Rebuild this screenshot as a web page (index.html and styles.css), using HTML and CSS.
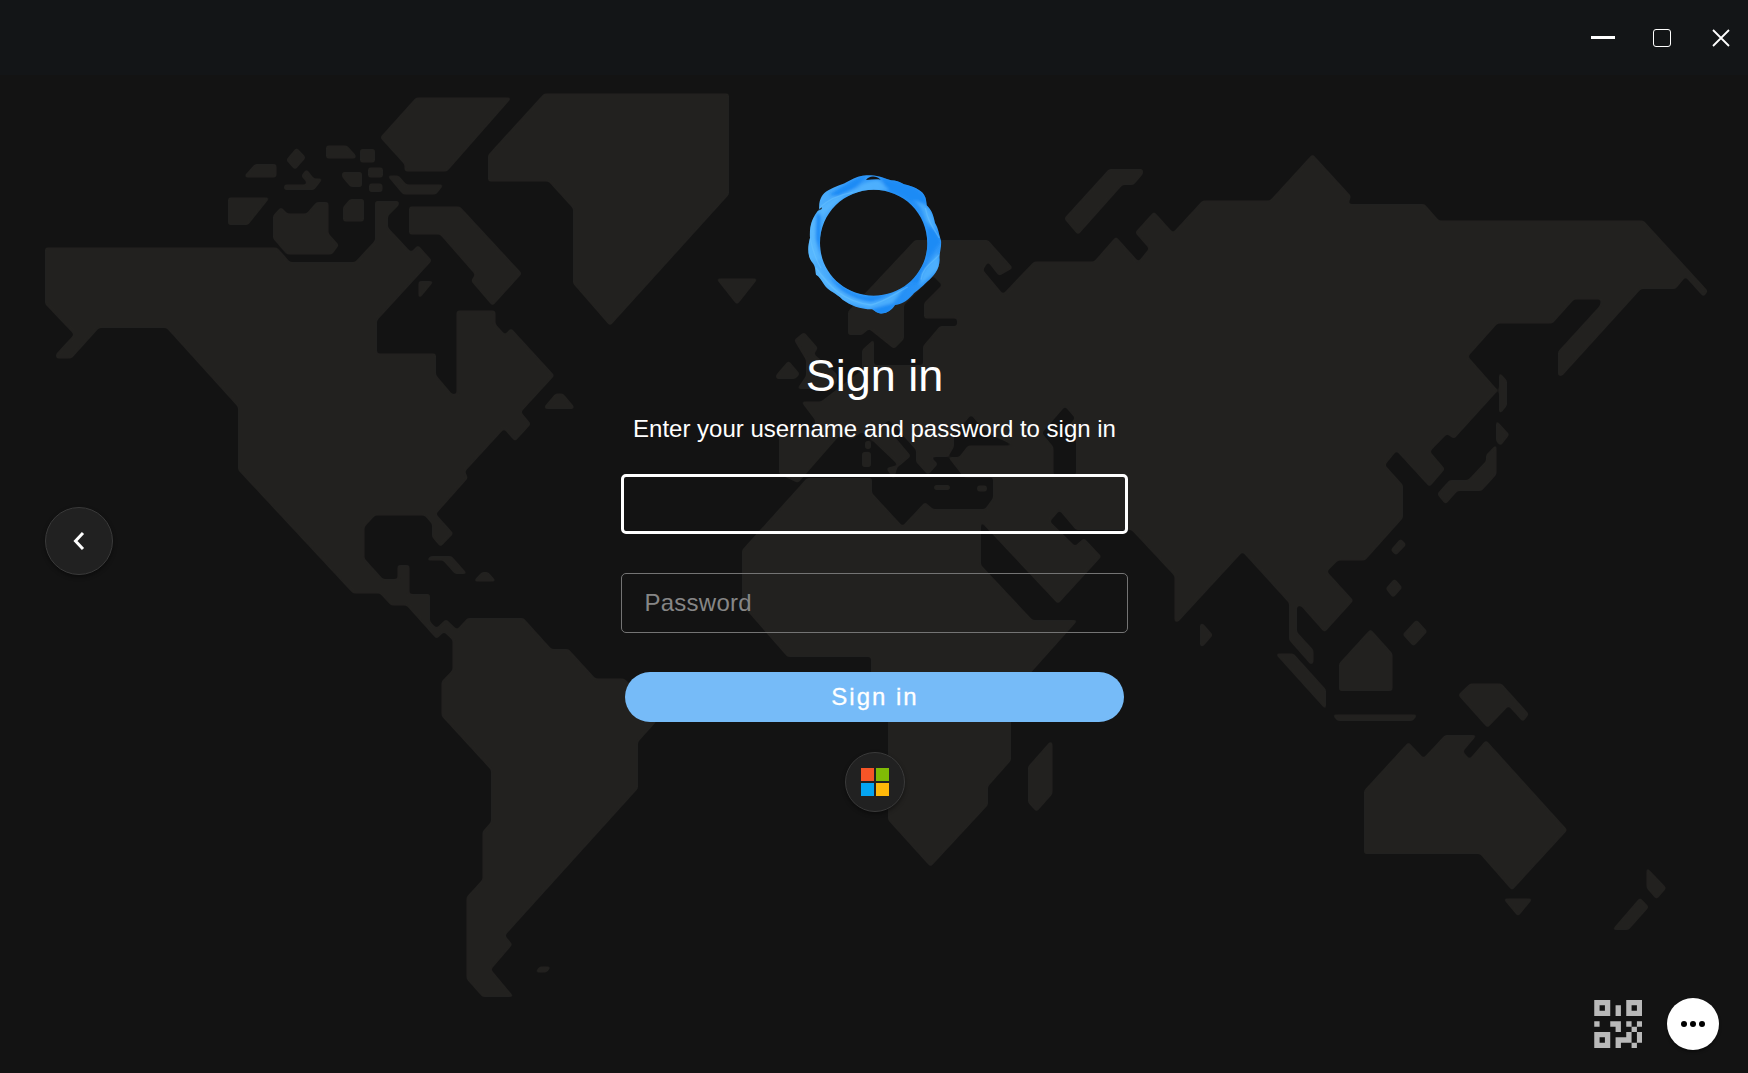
FILE: index.html
```html
<!DOCTYPE html>
<html lang="en">
<head>
<meta charset="utf-8">
<title>Sign in</title>
<link rel="stylesheet" href="styles.css">
</head>
<body>
<div class="window">
  <svg class="map" viewBox="0 0 1748 1073" aria-hidden="true">
    <defs>
      <filter id="soften" x="0" y="0" width="1748" height="1073" filterUnits="userSpaceOnUse" color-interpolation-filters="sRGB">
        <feGaussianBlur stdDeviation="1.6"/>
        <feComponentTransfer><feFuncA type="linear" slope="4" intercept="-1.5"/></feComponentTransfer>
      </filter>
    </defs>
    <g class="land" filter="url(#soften)">
      <!-- North and South America -->
      <path d="M45 247.500H277L290 262H355L375 240.500V201H399V205L388 216V227.500L411 252L418 245L432 260.500L377 320.500V353.500H436V375L452 394H456.500V310.500H495.500V324L505 334.500L511 328L554.500 375.500L521 412L531 424L515 441.500L504 429L465 471.500L468 478L436 514L453.500 533.500L440.500 547L432 537V524L424.500 515.500H375L364.500 527V558.500L383 579H397.500V565H409.500V594H430V621.500L436.500 628L446 619L457 629.500L467.500 618H523.500L551.500 649H568.500L595.500 678.500H624L656 708V722L638 742V788.500L505 935.500L512.500 944.500L491 969.500L514 997H482.500L466.500 979V897L482.500 879.500V831.500L491 822V770L441.500 716V681.500L452.500 670V640L444 632L436.500 639L406.500 605.500H391L380 593.500H353L238 470V407L166.500 328H99L71.500 358.500H56V354L74 334.500L45 304Z"/>
      <!-- Arctic islands and Greenland -->
      <path d="M416 97.500H512L447 171.500H404.500V164.500L380 137.500ZM544 93.500H729V194.500L610 326L573 283.500V208.500L548.500 181.500H488V155ZM409 206.500H460L522 273.500L492.500 306L471 281L475 274.500L440 234.500H409ZM387 175.500H398.500L406.500 184.500H444L436 194.500H403ZM350 199H364V221.500H343V207ZM369 183.500H382.500V192H369ZM368 167.500H383V177.500H368ZM360 149H375V162.500H360ZM342 172H362V187H350.500L342 177ZM326 145.500H347L356 155.500V158.500H326ZM296.500 147.500L306 157.500L295 170L286 160ZM255 164H276.500V177.500H245V175ZM306.500 169L314 178.500H323L314 190H284V184.500H306.500V182L301 176ZM228 197.500H270L248 225H228ZM273 215.500L281 207L287.500 213.500H306.500L316.500 202H328.500V233.500L339 245L332 254.500H287L273 238.500ZM418.500 281H434L420 298H418.500ZM544.500 406.500L555.500 393.500H563L574 406.500V409H544.500ZM716 278.500H758L737 305ZM426 560.500L430.500 556H451.500L467.500 574H455L443 560.500ZM473 581.500L482 572H488L496.500 581.500ZM535 972.500L539.500 966.500H551.500L546.500 972.500Z"/>
      <!-- Europe, Africa and Asia with the enclosed Caspian Sea -->
      <path fill-rule="evenodd" d="M779 430V474L798 483L840 435L852 439L862 432L873 441L898 465L886 468L894 480L897 468L911 456L884 424L889 420L916 450V462L928 475L938 464L931 457H948L954 447V435L971 415L987 433L1014 445.500H968L959 457H948L964 477.500H993V498L985 509H933L925 502L902.500 526L872 493V478H807L742 550V605L787.500 657H871V680L888 700V820L930.500 867L988 805V786.500L1011 760.500V695L1078 620H1032.500L981 565V522L1058 604L1101.500 556.500L1084 538L1075 546L1050 521.500L1059.500 510.500L1076 530H1131.500L1174.500 576V622H1178L1242.500 552L1289 603V640L1311 665L1313.500 663V650L1297 632V606H1301L1324.500 632.500L1353.500 600.500L1327 571.500L1338 560.500H1365L1403 518V485L1385 465L1396.500 451L1429.500 487L1445 469L1430 451.500L1447 434L1454 439L1498 390.500L1468 356.500L1497.500 323.500H1552.500L1574 299.500H1601L1600 305.500L1558 351.500V376H1562L1641 289H1675.500L1685.500 277L1703.500 297L1708 291L1643.500 220.500H1439L1424.500 204H1348.500L1351 196L1312.500 154L1270 200.500H1202.500L1173 232.500L1154 211.500L1135 232.500L1149 248.500L1138.500 261.500L1116 236.500L1094 261.500H1034L1003 294L983 270L988 262L999 276L1013 268L988 240H915L848 311.500V335H862L869 329L894 349L904 339V305L933 276L942 285L924 303V318.500H957V326H940L923 346V365H874V339L862 350V370L836 390L821 401.500H801L815 420V430ZM1065 406.500L1075 418L1067 428L1076 440V475H1053.500V447L1042 433Z"/>
      <!-- European islands -->
      <path d="M794 340L804 332L818 348L814 354L837 374V383L828 389H797L806 376V360ZM788.500 360.500L800 374L795 379H776V375ZM865 441H871V449H865ZM862 452H871V467H862ZM934 485H950V490H934ZM977 485.500H987V491.500H977ZM1050.500 741L1052.500 743V794L1036.500 812L1028 802.500V766.500Z"/>
      <!-- Pacific and Indian Ocean islands -->
      <path d="M1109 169H1143V174L1133.500 185H1122.500L1078 235L1064 218.500ZM1499 372L1507 380.500V405.500L1501 413H1499ZM1496 420L1509.500 434.500L1500.500 446L1496 441ZM1496.500 444V474.500L1481.500 491H1457.500L1445.500 504.500L1437 494L1449.500 480H1468L1486 461V455ZM1400.500 538.500L1406.500 544.500L1396 555.500L1390.500 550ZM1394.500 578.500L1402.500 587.500L1393 598L1385.500 588.500ZM1416.500 619.500L1427.500 631.500L1413.500 646.500L1402.500 634.500ZM1370.500 629L1392.500 653.500V691H1339V663.500ZM1200 623.500H1203L1213 635L1203 646.500H1200ZM1275 653.500H1293.500L1326 689.500V710ZM1332 714.500H1418L1412.500 721H1337.500ZM1458 695L1470 683.500H1501.500L1529 714L1523 722L1508.500 706L1487.500 728ZM1364 790.500L1408.500 742L1423.500 758L1445 735H1477L1463 751.500L1469.500 759L1486 740L1567.500 830L1512 890.500L1480 854H1364ZM1503 898.500H1533L1518 916.500ZM1646.500 867L1666.500 888L1656.500 899.500L1646.500 888ZM1640 897.500L1649 907L1628.500 930H1612Z"/>
    </g>
  </svg>

  <header class="titlebar">
    <button class="caption-button" aria-label="Minimize"><span class="minimize"></span></button>
    <button class="caption-button" aria-label="Maximize"><span class="maximize"></span></button>
    <button class="caption-button" aria-label="Close">
      <svg class="close" viewBox="0 0 18 18"><path d="M1 1L17 17M17 1L1 17"/></svg>
    </button>
  </header>

  <main class="content">
    <button class="round back" aria-label="Back">
      <svg viewBox="0 0 12 20"><path d="M10 2L2.500 10L10 18"/></svg>
    </button>

    <form class="signin">
      <svg class="logo" viewBox="80 40 411 429" aria-hidden="true">
        <defs>
          <linearGradient id="ring" x1="0" y1="0" x2="1" y2="0">
            <stop offset="0" stop-color="#55b5fd"/><stop offset=".3" stop-color="#3b9ff9"/>
            <stop offset=".7" stop-color="#2590f6"/><stop offset="1" stop-color="#3299f9"/>
          </linearGradient>
          <clipPath id="band">
            <path clip-rule="evenodd" d="M262 47C290 46 305 52 335 62C350 62 360 66 374 74C400 80 425 90 434 105C441 115 441 128 442 137C456 150 462 165 467 190C478 208 478 222 486 247C485 270 479 285 481 300C480 330 462 350 445 365C425 385 410 395 400 405C380 427 362 435 347 436C338 450 327 460 305 462C290 460 287 453 278 449C240 448 215 438 190 420C170 400 150 395 138 380C125 360 120 350 110 345C108 330 108 320 100 310C84 290 84 265 92 235C90 200 97 175 120 148C117 125 127 102 147 92C165 80 190 75 210 63C228 53 245 48 262 47ZM283 90C194 90 122 161 122 250C122 338 194 408 283 408C372 408 444 338 444 250C444 161 372 90 283 90Z"/>
          </clipPath>
          <filter id="blend" x="-5%" y="-5%" width="110%" height="110%"><feGaussianBlur stdDeviation="4"/></filter>
        </defs>
        <g clip-path="url(#band)">
          <path class="ring-base" d="M80 40H491V469H80Z"/>
          <g filter="url(#blend)">
            <path class="deep" d="M296 50C340 68 380 70 415 90L440 112L445 170C400 120 350 93 300 90C320 80 320 65 296 50ZM445 205C460 200 475 220 486 248L440 305ZM112 162L124 165L123 290L108 235ZM150 350C185 375 210 405 260 412L320 408L275 428C220 420 175 390 150 350ZM278 448L350 430L325 462L300 466ZM430 315L450 300L425 365L395 372ZM190 80C220 65 240 50 262 47C245 72 215 100 180 109L150 105Z"/>
            <path class="light" d="M122 147C160 110 205 98 235 85C250 67 285 60 300 62L330 92L200 105L125 172ZM438 135C460 160 464 185 474 215L440 185C430 150 425 140 400 120ZM108 318C150 370 190 415 275 428C330 420 350 390 375 385L340 430L270 447L190 425L110 350ZM475 280C455 310 440 320 427 342L420 378L482 325ZM92 190L108 170L110 240L123 300L84 300Z"/>
          </g>
          <path class="gleam" d="M120 145C145 120 180 105 220 98M438 145C445 180 455 195 480 235M110 325C150 380 190 425 275 436C320 425 350 400 385 382M425 360C430 320 460 310 480 285M92 235C100 270 108 300 125 325"/>
        </g>
        <path class="notch" d="M260 61C268 48 290 46 304 60C290 57 275 60 260 61ZM115 154L127 143L127 148Z"/>
      </svg>
      <h1 class="heading">Sign in</h1>
      <p class="hint">Enter your username and password to sign in</p>
      <input class="field field-active" type="text" aria-label="Username">
      <input class="field" type="password" placeholder="Password" aria-label="Password">
      <button class="submit" type="button">Sign in</button>
      <button class="round provider" type="button" aria-label="Sign in with Microsoft">
        <span class="tiles"><i class="red"></i><i class="green"></i><i class="blue"></i><i class="yellow"></i></span>
      </button>
    </form>
  </main>

  <footer class="tools">
    <svg class="qr" viewBox="0 0 9 9" aria-label="QR code">
      <path fill-rule="evenodd" d="M0 0H3V3H0ZM1 1V2H2V1ZM6 0H9V3H6ZM7 1V2H8V1ZM0 6H3V9H0ZM1 7V8H2V7ZM4 1H5V3H4ZM0 4H1V5H0ZM3 4H5V6H4V5H3ZM6 4H7V5H6ZM8 4H9V5H8ZM7 5H8V6H7ZM6 6H7V8H5V9H4V7H6ZM8 6H9V8H8ZM7 8H8V9H7Z"/>
    </svg>
    <button class="more" aria-label="More options"><i></i><i></i><i></i></button>
  </footer>
</div>
</body>
</html>
```
FILE: styles.css
```css
* { box-sizing: border-box; }
body {
  margin: 0;
  background: #131313;
  color: #fff;
  font-family: "Liberation Sans", Arial, sans-serif;
}
button { border: 0; padding: 0; background: none; color: inherit; font: inherit; }
.window {
  position: relative;
  display: flex;
  flex-direction: column;
  height: 1073px;
  overflow: hidden;
}
.map { position: absolute; inset: 0; width: 1748px; height: 1073px; }
.land { fill: #22211f; }

.titlebar {
  position: relative;
  display: flex;
  justify-content: flex-end;
  height: 75px;
  padding: 8px 0 0;
  background: #131517;
}
.caption-button {
  display: flex;
  align-items: center;
  justify-content: center;
  width: 59px;
  height: 60px;
}
.caption-button:first-child { height: 59px; }
.caption-button:last-child { width: 56.500px; padding-left: 1.500px; }
.minimize { width: 24px; height: 3px; background: #fff; }
.maximize { width: 18px; height: 18px; border: 1px solid #fff; border-radius: 3px; }
.close { width: 18px; height: 18px; fill: none; stroke: #fff; stroke-width: 1.800; }

.content {
  position: relative;
  flex: 1;
  display: grid;
  grid-template-columns: 1fr 507px 1fr;
  align-items: start;
}
.round {
  display: flex;
  align-items: center;
  justify-content: center;
  border: 1px solid #3a3a3a;
  border-radius: 50%;
  background: #212121;
  box-shadow: 0 2px 4px rgba(0, 0, 0, .4);
}
.back { width: 68px; height: 68px; margin: 432px 0 0 45px; }
.back svg { width: 12px; height: 20px; fill: none; stroke: #fff; stroke-width: 3; }

.signin { display: flex; flex-direction: column; align-items: center; padding-top: 98px; }
.logo { width: 137px; height: 143px; }
.ring-base { fill: url(#ring); }
.deep { fill: #1e8bf5; }
.light { fill: #58b9ff; opacity: .7; }
.gleam { fill: none; stroke: #6cc6ff; stroke-width: 4; opacity: .45; }
.notch { fill: #131313; }
.heading { margin: 34px 0 0; padding-left: 1px; font-size: 45px; font-weight: 400; line-height: 52px; }
.hint { margin: 13px 0 0; padding-left: 1px; font-size: 24px; line-height: 28px; white-space: nowrap; }
.field {
  width: 507px;
  height: 60px;
  margin-top: 39px;
  padding: 0 23px;
  border: 1px solid #747474;
  border-radius: 5px;
  background: transparent;
  color: #fff;
  font: 24px "Liberation Sans", Arial, sans-serif;
  outline: none;
}
.hint + .field { margin-top: 31px; }
.field-active { border: 3px solid #fff; }
.field::placeholder { color: #868686; opacity: 1; letter-spacing: .25px; }
.submit {
  width: 499px;
  height: 50px;
  margin-top: 39px;
  padding-left: 2px;
  border-radius: 25px;
  background: #76bbf8;
  font-size: 24px;
  letter-spacing: 2px;
  -webkit-text-stroke: .3px #fff;
}
.provider { width: 60px; height: 60px; margin: 30px 0 0 1px; }
.tiles { display: grid; grid-template-columns: 13px 13px; grid-auto-rows: 13px; gap: 2px; }
.red { background: #f65527; }
.green { background: #80bb05; }
.blue { background: #04a4f1; }
.yellow { background: #ffb809; }

.tools {
  position: relative;
  display: flex;
  align-items: center;
  justify-content: flex-end;
  gap: 25px;
  height: 52px;
  margin: 0 29px 23px;
}
.qr { width: 48.500px; height: 48px; fill: #b9b9b9; }
.more {
  display: flex;
  align-items: center;
  justify-content: center;
  gap: 3px;
  width: 52px;
  height: 52px;
  border-radius: 50%;
  background: #fff;
  box-shadow: 0 2px 3px rgba(0, 0, 0, .4);
}
.more i { width: 6px; height: 6px; border-radius: 50%; background: #000; }
```
